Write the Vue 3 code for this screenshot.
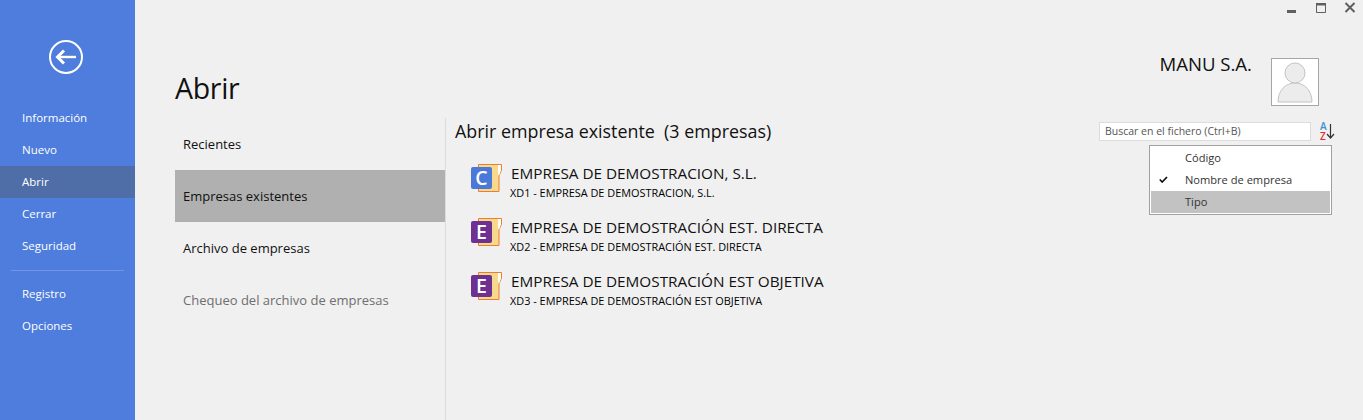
<template>
  <div class="app">
    <aside class="sidebar">
      <div class="back">
        <svg width="36" height="36" viewBox="0 0 36 36">
          <circle cx="18" cy="18" r="16" fill="none" stroke="#fff" stroke-width="2" />
          <path d="M10 18H28" stroke="#fff" stroke-width="2.400" fill="none" />
          <path d="M16 11.500L9.500 18L16 24.500" stroke="#fff" stroke-width="3" fill="none" />
        </svg>
      </div>
      <ul class="side-menu">
        <li v-for="item in topItems" :key="item" :class="{ active: item === 'Abrir' }">{{ item }}</li>
      </ul>
      <div class="side-sep"></div>
      <ul class="side-menu">
        <li v-for="item in bottomItems" :key="item">{{ item }}</li>
      </ul>
    </aside>

    <main class="main">
      <div class="win-controls">
        <svg width="12" height="12" viewBox="0 0 12 12"><rect x="1" y="8" width="9" height="3" fill="#5f5f5f" /></svg>
        <svg width="12" height="12" viewBox="0 0 12 12"><path d="M1.500 1.500H10.500V10.500H1.500Z" fill="none" stroke="#5f5f5f" /><rect x="1" y="1" width="10" height="2.500" fill="#5f5f5f" /></svg>
        <svg width="12" height="12" viewBox="0 0 12 12"><path d="M1.500 1L10.500 10M10.500 1L1.500 10" stroke="#5f5f5f" stroke-width="2" fill="none" /></svg>
      </div>

      <header class="header">
        <h1>Abrir</h1>
        <div class="user">
          <span class="user-name">MANU S.A.</span>
          <div class="avatar">
            <svg width="46" height="46" viewBox="0 0 46 46">
              <path d="M6 43C6 32 13 24 23 24C33 24 40 32 40 43Z" fill="#ececec" stroke="#c4c4c4" />
              <circle cx="23" cy="14" r="10" fill="#ececec" stroke="#c4c4c4" />
            </svg>
          </div>
        </div>
      </header>

      <div class="body">
        <nav class="sub-nav">
          <div
            v-for="opt in navItems"
            :key="opt.label"
            class="sub-item"
            :class="{ selected: opt.selected, disabled: opt.disabled }"
          >{{ opt.label }}</div>
        </nav>

        <section class="content">
          <div class="content-top">
            <h2>Abrir empresa existente&nbsp; (3 empresas)</h2>
            <div class="tools">
              <div class="search">Buscar en el fichero (Ctrl+B)</div>
              <div class="sort">
                <div class="sort-letters">
                  <div class="sort-a">A</div>
                  <div class="sort-z">Z</div>
                </div>
                <svg width="10" height="18" viewBox="0 0 10 18">
                  <path d="M4.500 2V16M1 12L4.500 16L8 12" stroke="#333" stroke-width="1.200" fill="none" />
                </svg>
              </div>
              <div class="dropdown">
                <div v-for="o in sortOptions" :key="o.label" class="drop-item" :class="{ hover: o.hover }">
                  <svg v-if="o.checked" class="check" width="9" height="7" viewBox="0 0 9 7">
                    <path d="M0.800 3.500L3.200 6L8 1" stroke="#111" stroke-width="1.700" fill="none" />
                  </svg>
                  {{ o.label }}
                </div>
              </div>
            </div>
          </div>

          <ul class="companies">
            <li v-for="c in companies" :key="c.code" class="company">
              <div class="co-icon">
                <svg width="32" height="32" viewBox="0 0 32 32">
                  <path d="M8.500 1.500H31.500V7L29 13V28.500H8.500Z" fill="#f7d98c" stroke="#ed7d31" />
                  <path d="M28 2H31V7L29 13L28 10Z" fill="#fff" />
                  <rect x="1" y="4" width="21" height="22" rx="2" :fill="c.color" />
                  <text x="11.500" y="22" class="co-letter">{{ c.letter }}</text>
                </svg>
              </div>
              <div class="co-text">
                <div class="co-name">{{ c.name }}</div>
                <div class="co-sub">{{ c.code }} - {{ c.name }}</div>
              </div>
            </li>
          </ul>
        </section>
      </div>
    </main>
  </div>
</template>

<script setup>
const topItems = ['Información', 'Nuevo', 'Abrir', 'Cerrar', 'Seguridad'];
const bottomItems = ['Registro', 'Opciones'];

const navItems = [
  { label: 'Recientes' },
  { label: 'Empresas existentes', selected: true },
  { label: 'Archivo de empresas' },
  { label: 'Chequeo del archivo de empresas', disabled: true },
];

const sortOptions = [
  { label: 'Código' },
  { label: 'Nombre de empresa', checked: true },
  { label: 'Tipo', hover: true },
];

const companies = [
  { code: 'XD1', letter: 'C', color: '#4a79d9', name: 'EMPRESA DE DEMOSTRACION, S.L.' },
  { code: 'XD2', letter: 'E', color: '#6f3191', name: 'EMPRESA DE DEMOSTRACIÓN EST. DIRECTA' },
  { code: 'XD3', letter: 'E', color: '#6f3191', name: 'EMPRESA DE DEMOSTRACIÓN EST OBJETIVA' },
];
</script>

<style>
html,
body {
  margin: 0;
  background: #f0f0f0;
}
</style>

<style scoped>
.app {
  display: flex;
  width: 1363px;
  height: 420px;
  overflow: hidden;
  background: #f0f0f0;
  color: #111;
  font-family: "Open Sans", "Noto Sans", sans-serif;
}

.sidebar {
  width: 135px;
  flex-shrink: 0;
  background: #4e7ddd;
  color: #fff;
}

.back {
  display: flex;
  justify-content: center;
  padding: 39px 3px 0 0;
  height: 63px;
}

.side-menu {
  list-style: none;
  margin: 0;
  padding: 0;
}

.side-menu li {
  height: 32px;
  line-height: 32px;
  padding-left: 22px;
  font-size: 11.500px;
}

.side-menu li.active {
  background: #4f6da6;
}

.side-sep {
  height: 1px;
  margin: 8px 11px 7px;
  background: #7396e4;
}

.main {
  flex: 1;
  display: flex;
  flex-direction: column;
  min-width: 0;
}

.win-controls {
  display: flex;
  justify-content: flex-end;
  gap: 17px;
  height: 16px;
  padding: 2px 7px 0 0;
}

.header {
  display: flex;
  justify-content: space-between;
  height: 100px;
  padding-left: 40px;
}

.header h1 {
  margin: 0;
  padding-top: 48px;
  font-size: 28.500px;
  font-weight: 400;
  line-height: 44px;
  letter-spacing: -0.3px;
}

.user {
  display: flex;
  align-items: flex-start;
  gap: 19px;
  padding: 40px 44px 0 0;
}

.user-name {
  height: 24px;
  font-size: 18.600px;
  font-weight: 400;
  line-height: 12px;
}

.avatar {
  width: 46px;
  height: 46px;
  background: #fff;
  border: 1px solid #a6a6a6;
}

.avatar svg {
  display: block;
}

.body {
  flex: 1;
  display: flex;
  min-height: 0;
}

.sub-nav {
  width: 270px;
  margin-left: 40px;
  flex-shrink: 0;
}

.sub-item {
  height: 52px;
  line-height: 52px;
  padding-left: 8px;
  font-size: 13px;
}

.sub-item.selected {
  background: #b0b0b0;
}

.sub-item.disabled {
  color: #6e6e6e;
}

.content {
  flex: 1;
  border-left: 1px solid #dcdcdc;
  padding-left: 9px;
}

.content-top {
  display: flex;
  justify-content: space-between;
}

.content-top h2 {
  margin: 0;
  font-size: 17.850px;
  font-weight: 400;
  line-height: 27px;
}

.tools {
  position: relative;
  display: flex;
  align-items: flex-start;
  gap: 7px;
  padding: 4px 27px 0 0;
}

.search {
  box-sizing: border-box;
  width: 212px;
  height: 19px;
  padding-left: 5px;
  background: #fff;
  border: 1px solid #dcdcdc;
  color: #555;
  font-size: 10.500px;
  line-height: 17px;
}

.sort {
  display: flex;
  width: 18px;
  padding-left: 2px;
  box-sizing: border-box;
}

.sort-letters {
  width: 6px;
  font-size: 10px;
  font-weight: 600;
  line-height: 9.500px;
}

.sort-a {
  height: 9.500px;
  color: #3f8fd8;
}

.sort-z {
  height: 9.500px;
  color: #e8272c;
}

.dropdown {
  position: absolute;
  top: 27px;
  right: 31px;
  box-sizing: border-box;
  width: 183px;
  height: 70px;
  padding: 1px;
  background: #fff;
  border: 1px solid #a0a0a0;
}

.drop-item {
  position: relative;
  height: 22px;
  line-height: 22px;
  padding-left: 34px;
  font-size: 11.100px;
  color: #333;
}

.drop-item.hover {
  background: #c2c2c2;
}

.check {
  position: absolute;
  left: 8px;
  top: 7px;
}

.companies {
  list-style: none;
  margin: 13px 0 0;
  padding: 0;
}

.company {
  display: flex;
  height: 54px;
  align-items: flex-start;
}

.co-icon {
  width: 40px;
  margin-left: 15px;
  padding-top: 5px;
  flex-shrink: 0;
}

.co-icon svg {
  display: block;
}

.co-letter {
  font-family: "Open Sans", sans-serif;
  font-size: 19.500px;
  font-weight: 600;
  fill: #fff;
  text-anchor: middle;
}

.co-text {
  padding-top: 3px;
}

.co-name {
  margin-left: 1px;
  font-size: 15.300px;
  line-height: 24px;
  white-space: nowrap;
}

.co-sub {
  font-size: 10.900px;
  line-height: 16px;
  font-weight: 500;
  color: #000;
  white-space: nowrap;
}
</style>
